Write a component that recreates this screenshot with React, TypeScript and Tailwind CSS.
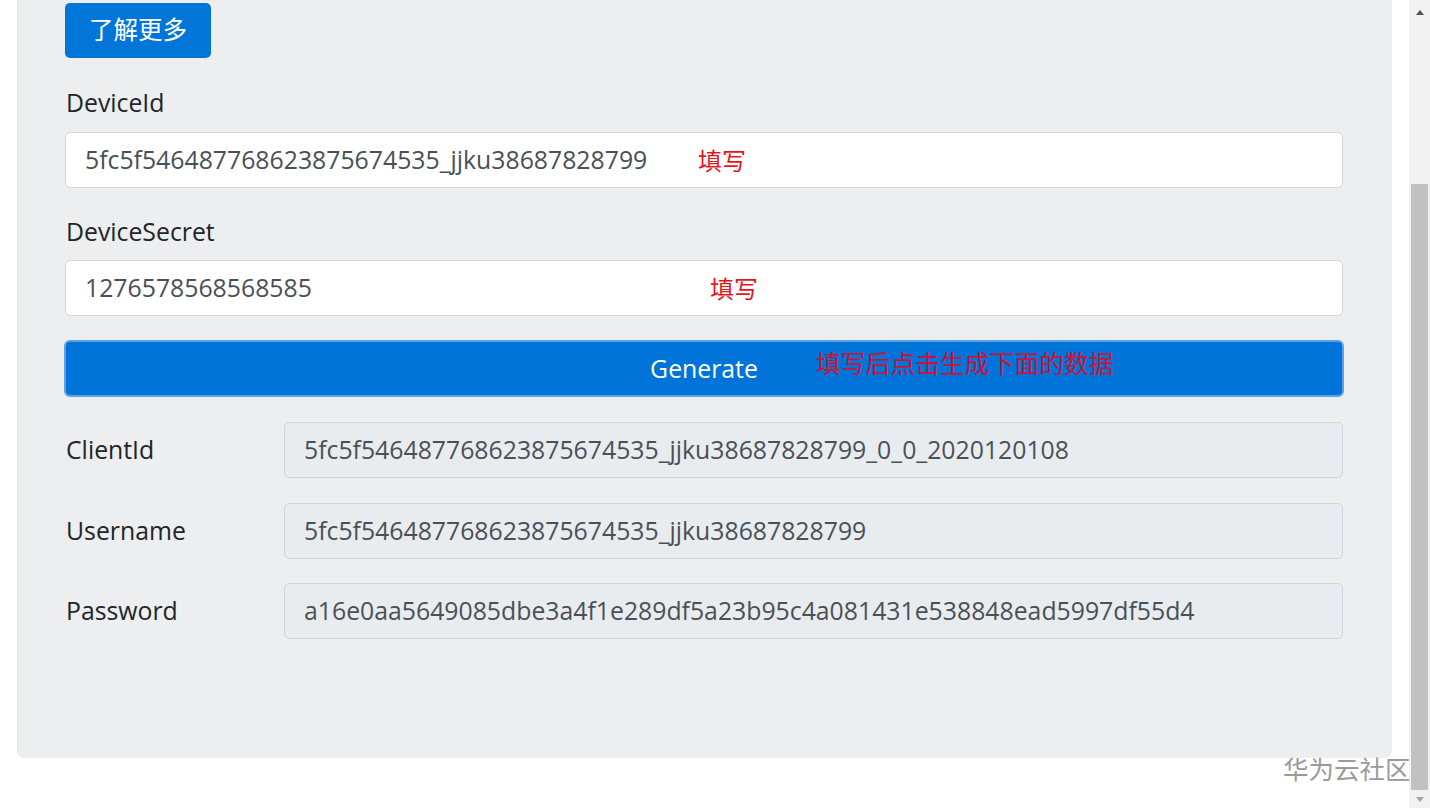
import React from 'react';

const font = { fontFamily: '"Open Sans", "Noto Sans CJK SC", sans-serif' };

function Field({ value, note, noteLeft }: { value: string; note?: string; noteLeft?: string }) {
  return (
    <div className="relative h-[56px] w-[1278px] rounded-[5px] border border-[#ced4da] bg-white pl-[19px] flex items-center text-[24.8px] text-[#495057]">
      {value}
      {note && (
        <span className={`absolute top-[13px] ${noteLeft} text-[24px] text-[#e8141c] leading-[30px]`}>{note}</span>
      )}
    </div>
  );
}

function Output({ label, value }: { label: string; value: string }) {
  return (
    <div className="flex items-center">
      <div className="w-[219px] pl-[1px] text-[24.8px] text-[#212529]">{label}</div>
      <div className="h-[56px] w-[1059px] rounded-[5px] border border-[#ced4da] bg-[#e9ecef] pl-[19px] flex items-center text-[24.8px] text-[#495057]">
        {value}
      </div>
    </div>
  );
}

export default function App() {
  return (
    <div className="relative flex h-[808px] w-[1430px] overflow-hidden bg-white" style={font}>
      <div className="flex-1 pl-[17px] pr-[17px]">
        <div className="flex h-[758px] flex-col rounded-b-[8px] border-l border-[#e2e4e6] bg-[#eceef0] pl-[47px] pt-[3px]">
          <div>
            <button className="h-[55px] w-[146px] rounded-[5px] bg-[#0275d8] text-[24.5px] text-white">了解更多</button>
          </div>

          <div className="mt-[26px] h-[36px] leading-[36px] pl-[1px] text-[24.8px] text-[#212529]">DeviceId</div>
          <div className="mt-[12px]">
            <Field value="5fc5f546487768623875674535_jjku38687828799" note="填写" noteLeft="left-[632px]" />
          </div>

          <div className="mt-[25px] h-[36px] leading-[36px] pl-[1px] text-[24.8px] text-[#212529]">DeviceSecret</div>
          <div className="mt-[11px]">
            <Field value="1276578568568585" note="填写" noteLeft="left-[644px]" />
          </div>

          <div className="mt-[24px] -ml-[1px]">
            <button className="relative h-[57px] w-[1280px] rounded-[6px] border-2 border-[#5aa2ea] bg-[#0074d9] text-[24.8px] text-white">
              <span>Generate</span>
              <span className="absolute left-[750px] top-[3px] text-[24.8px] text-[#c8143a]">填写后点击生成下面的数据</span>
            </button>
          </div>

          <div className="mt-[25px] flex flex-col gap-[24.5px]">
            <Output label="ClientId" value="5fc5f546487768623875674535_jjku38687828799_0_0_2020120108" />
            <Output label="Username" value="5fc5f546487768623875674535_jjku38687828799" />
            <Output label="Password" value="a16e0aa5649085dbe3a4f1e289df5a23b95c4a081431e538848ead5997df55d4" />
          </div>
        </div>
      </div>

      <div className="flex h-[808px] w-[21px] flex-col items-center bg-[#f1f1f1]">
        <div className="flex h-[17px] items-center justify-center pt-[8px]">
          <div className="h-0 w-0 border-x-[4px] border-b-[5px] border-x-transparent border-b-[#505050]" />
        </div>
        <div className="h-[167px]" />
        <div className="h-[606px] w-[17px] bg-[#c1c1c1]" />
        <div className="flex flex-1 items-center justify-center">
          <div className="h-0 w-0 border-x-[4px] border-t-[5px] border-x-transparent border-t-[#a3a3a3]" />
        </div>
      </div>

      <div
        className="absolute left-[1283px] top-[752px] text-[25.5px] leading-[32px] text-[#9a9a9a]"
        style={{ fontFamily: '"Noto Sans CJK SC", sans-serif' }}
      >
        华为云社区
      </div>
    </div>
  );
}
